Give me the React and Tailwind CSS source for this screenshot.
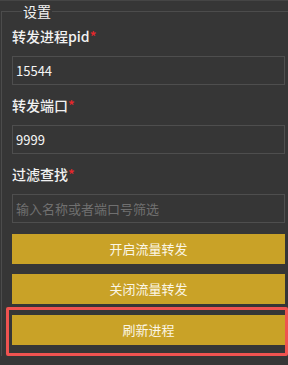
import React from 'react';

const fields = [
  { label: '转发进程pid', value: '15544' },
  { label: '转发端口', value: '9999' },
  { label: '过滤查找', value: '', placeholder: '输入名称或者端口号筛选' },
];

const App = () => {
  return (
    <div
      className="w-[288px] h-[365px] overflow-hidden bg-[#363636] text-[#f2f2f2] border-t border-[#454545]"
      style={{ fontFamily: '"Noto Sans CJK SC", "Noto Sans", sans-serif' }}
    >
      <fieldset className="ml-px border-t border-l border-[#4c4c4c] pl-[10px] pr-[3px] pt-[5px]">
        <legend className="ml-[10px] px-px text-[14px] leading-[20px]">设置</legend>

        {/* Form fields */}
        {fields.map((f) => (
          <div key={f.label} className="mb-[10px]">
            <label className="block text-[14px] leading-[20px] mb-[10px] font-medium">
              {f.label}
              <span className="text-[#e8262b]">*</span>
            </label>
            <input
              type="text"
              defaultValue={f.value}
              placeholder={f.placeholder}
              className="block w-full h-[29px] border border-[#4e4e4e] bg-transparent px-[3px] text-[13px] text-[#f5f5f5] placeholder:text-[#707070] outline-none"
            />
          </div>
        ))}

        {/* Action buttons */}
        <div className="flex flex-col gap-[10px] pt-px">
          <button className="h-[30px] w-full bg-[#c9a227] text-[13px] text-[#fbf6e6]">开启流量转发</button>
          <button className="h-[30px] w-full bg-[#c9a227] text-[13px] text-[#fbf6e6]">关闭流量转发</button>
        </div>
        <div className="-ml-[6px] -mr-[3px] mt-[3px] rounded-[2px] border-[3px] border-[#ef5350] pl-[3px] pt-[5px] pb-[8px]">
          <button className="h-[30px] w-full bg-[#c9a227] text-[13px] text-[#fbf6e6]">刷新进程</button>
        </div>
      </fieldset>
    </div>
  );
};

export default App;
